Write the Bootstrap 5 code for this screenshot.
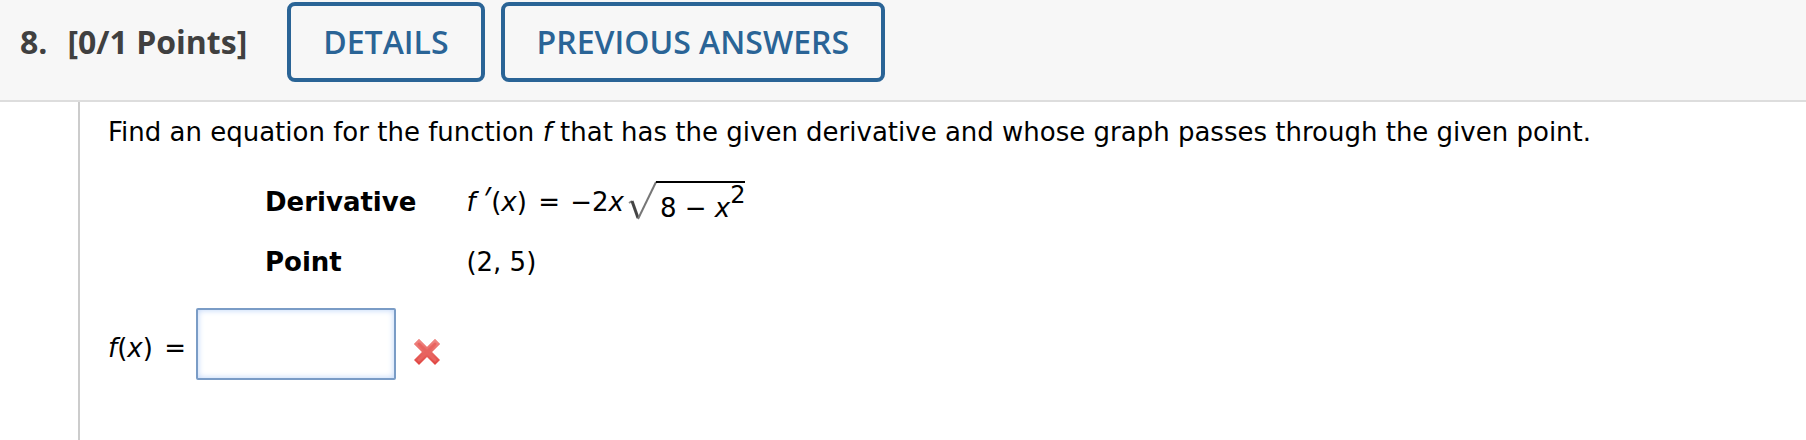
<!DOCTYPE html>
<html lang="en">
<head>
<meta charset="utf-8">
<meta name="viewport" content="width=device-width, initial-scale=1">
<title>Question 8</title>
<link href="https://cdn.jsdelivr.net/npm/bootstrap@5.3.0/dist/css/bootstrap.min.css" rel="stylesheet">
<style>
  body { font-family: "DejaVu Sans", Verdana, sans-serif; font-size: 26px; line-height: 32px; color: #000; background: #fff; }
  .question-bar { background: #f7f7f7; border-bottom: 2px solid #ddd; padding: 2px 20px 18px; font-family: "Open Sans", sans-serif; }
  .question-title { font-size: 32px; line-height: 44px; font-weight: 700; color: #404040; gap: 20px; margin-right: 40px; }
  .btn-question { --bs-btn-color: #2a6496; --bs-btn-border-color: #2a6496; --bs-btn-hover-color: #fff; --bs-btn-hover-bg: #2a6496; --bs-btn-hover-border-color: #2a6496;
    --bs-btn-border-width: 4px; --bs-btn-border-radius: 8px; --bs-btn-padding-x: 32px; --bs-btn-padding-y: 14px;
    --bs-btn-font-size: 32px; --bs-btn-line-height: 44px; --bs-btn-font-weight: 600; }
  .question-body { margin-left: 78px; border-left: 2px solid #ccc; padding: 14px 28px; }
  .given { margin: 24px 0 0 157px; }
  .given th, .given td { padding: 0; height: 60px; vertical-align: baseline; line-height: 60px; }
  .given th { padding-right: 50px; }
  .equals { margin: 0 2px 0 3px; }
  .prime { font-family: "Open Sans", sans-serif; font-size: 32px; line-height: 0; }
  .radical { width: 30px; height: 40px; margin-left: 4px; vertical-align: -10px; }
  .radicand { display: inline-block; border-top: 2px solid #000; line-height: 38px; padding: 6px 0 0 4px; margin-left: -2px; vertical-align: -6px; }
  .radicand sup { font-size: 24px; top: -14px; line-height: 0; vertical-align: baseline; }
  .answer { margin-top: 16px; gap: 8px; }
  .answer-box { width: 200px; height: 72px; border: 2px solid #7a9cc6; border-radius: 2px; box-shadow: inset 0 0 6px #b9d2f8; font-size: 26px; background: #fff; }
</style>
</head>
<body class="d-flex flex-column min-vh-100">
<header class="question-bar d-flex align-items-center flex-wrap">
  <div class="question-title d-flex">
    <span>8.</span>
    <span>[0/1 Points]</span>
  </div>
  <div class="d-flex flex-wrap gap-3">
    <button type="button" class="btn btn-question">DETAILS</button>
    <button type="button" class="btn btn-question">PREVIOUS ANSWERS</button>
  </div>
</header>
<main class="question-body flex-grow-1">
  <p class="mb-0">Find an equation for the function <i>f</i> that has the given derivative and whose graph passes through the given point.</p>
  <table class="given">
    <tr>
      <th scope="row">Derivative</th>
      <td class="text-nowrap"><i>f</i> <span class="prime">′</span>(<i>x</i>) <span class="equals">=</span> −2<i>x</i><svg class="radical" viewBox="0 0 30 40" aria-hidden="true"><path d="M1 22 L4 20" fill="none" stroke="#888" stroke-width="2"/><path d="M4 20 L10 37" fill="none" stroke="#444" stroke-width="3"/><path d="M10 38 L28 1" fill="none" stroke="#777" stroke-width="2"/></svg><span class="radicand">8 − <i>x</i><sup>2</sup></span></td>
    </tr>
    <tr>
      <th scope="row">Point</th>
      <td>(2, 5)</td>
    </tr>
  </table>
  <div class="answer d-flex align-items-center">
    <label for="answer" class="mt-2"><i>f</i>(<i>x</i>) <span class="equals">=</span></label>
    <input id="answer" type="text" class="answer-box px-2" autocomplete="off">
    <svg class="ms-2 mt-3" width="30" height="30" viewBox="0 0 30 30" role="img" aria-label="Incorrect">
      <defs><linearGradient id="red" x1="0" y1="0" x2="0" y2="1"><stop offset="0" stop-color="#f08a86"/><stop offset="1" stop-color="#df4440"/></linearGradient></defs>
      <path d="M7 2 L15 10 L23 2 L28 7 L20 15 L28 23 L23 28 L15 20 L7 28 L2 23 L10 15 L2 7 Z" fill="url(#red)" stroke="#f3a5a2" stroke-width="1" stroke-linejoin="round"/>
      <path d="M7 7 L23 23 M23 7 L7 23" stroke="#e8635f" stroke-width="3" stroke-linecap="round"/>
    </svg>
  </div>
</main>
<script src="https://cdn.jsdelivr.net/npm/bootstrap@5.3.0/dist/js/bootstrap.bundle.min.js"></script>
</body>
</html>
